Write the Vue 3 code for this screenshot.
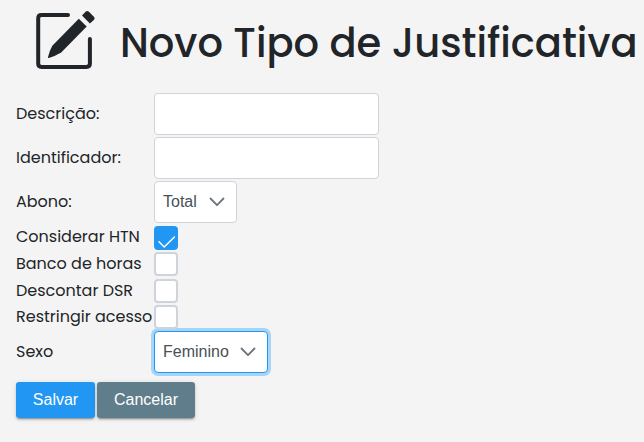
<template>
  <div class="page">
    <header class="page-header">
      <svg class="header-icon" viewBox="0 0 60 60" aria-hidden="true">
        <path class="icon-box" d="M33 4H6.6Q3.2 4 3.2 7.4V52.6Q3.2 56 6.6 56H51.4Q54.9 56 54.9 52.6V28" />
        <path class="icon-pen" d="M43.8 7.8 51.7 15.6 26.2 41.6Q20 45.4 13.9 46.9Q12.8 47.1 13 46Q14.4 40 17.3 34.8Z" />
        <path class="icon-pen" d="M47 4.4 50.8 0.6Q52.3 -0.6 53.7 0.6L59.1 6Q60.2 7.4 59.1 8.7L54.9 12.6Z" />
      </svg>
      <h1>Novo Tipo de Justificativa</h1>
    </header>

    <form @submit.prevent>
      <div class="row">
        <label for="descricao">Descrição:</label>
        <input id="descricao" v-model="form.descricao" type="text" class="input" />
      </div>
      <div class="row">
        <label for="identificador">Identificador:</label>
        <input id="identificador" v-model="form.identificador" type="text" class="input" />
      </div>
      <div class="row">
        <label for="abono">Abono:</label>
        <button id="abono" type="button" class="dropdown">
          <span>{{ form.abono }}</span>
          <svg viewBox="0 0 16 16" aria-hidden="true"><path d="M1.5 4.5 8 11.2 14.5 4.5" /></svg>
        </button>
      </div>

      <div class="checks">
        <div v-for="opcao in opcoes" :key="opcao.id" class="row check-row">
          <label :for="opcao.id">{{ opcao.label }}</label>
          <span class="checkbox" :class="{ checked: opcao.ativo }">
            <input :id="opcao.id" v-model="opcao.ativo" type="checkbox" />
            <svg v-if="opcao.ativo" viewBox="0 0 24 24" aria-hidden="true"><path d="M5 15.8 10.2 21 20.4 11" /></svg>
          </span>
        </div>
      </div>

      <div class="row">
        <label for="sexo">Sexo</label>
        <button id="sexo" type="button" class="dropdown dropdown-sexo focused">
          <span>{{ form.sexo }}</span>
          <svg viewBox="0 0 16 16" aria-hidden="true"><path d="M1.5 4.5 8 11.2 14.5 4.5" /></svg>
        </button>
      </div>

      <div class="actions">
        <button type="submit" class="btn btn-salvar">Salvar</button>
        <button type="button" class="btn btn-cancelar">Cancelar</button>
      </div>
    </form>
  </div>
</template>

<script setup>
import { reactive } from 'vue'

const form = reactive({
  descricao: '',
  identificador: '',
  abono: 'Total',
  sexo: 'Feminino',
})

const opcoes = reactive([
  { id: 'considerar', label: 'Considerar HTN', ativo: true },
  { id: 'banco', label: 'Banco de horas', ativo: false },
  { id: 'descontar', label: 'Descontar DSR', ativo: false },
  { id: 'restringir', label: 'Restringir acesso', ativo: false },
])
</script>

<style>
body {
  background: #f4f4f4;
}
</style>

<style scoped>
.page {
  box-sizing: border-box;
  height: 442px;
  padding-left: 16px;
  overflow: hidden;
  background: #f4f4f4;
  color: #212529;
  font-family: Poppins, Inter, sans-serif;
}

.page-header {
  display: flex;
  align-items: flex-start;
  height: 93px;
}

.header-icon {
  flex: none;
  width: 60px;
  height: 60px;
  margin: 11px 0 0 19px;
  overflow: visible;
}

.icon-box {
  fill: none;
  stroke: #212529;
  stroke-width: 4;
  stroke-linecap: round;
}

.icon-pen {
  fill: #212529;
}

h1 {
  margin: 19px 0 0 25px;
  font-size: 40px;
  font-weight: 500;
  line-height: 48px;
  white-space: nowrap;
}

.row {
  display: flex;
  align-items: center;
  height: 42px;
  margin-bottom: 2px;
}

.checks {
  box-sizing: border-box;
  height: 106px;
  padding-top: 0.5px;
}

.check-row {
  align-items: flex-start;
  height: 26.65px;
  margin-bottom: 0;
}

label {
  flex: none;
  width: 138px;
  font-size: 16px;
  line-height: 24px;
  white-space: nowrap;
}

.check-row label {
  margin-top: -0.15px;
}

.input {
  box-sizing: border-box;
  width: 225px;
  height: 42px;
  padding: 8px;
  border: 1px solid #ced4da;
  border-radius: 4px;
  outline: 0;
  background: #fff;
}

.dropdown {
  display: flex;
  align-items: center;
  justify-content: space-between;
  box-sizing: border-box;
  width: 83px;
  height: 42px;
  padding: 0 11px 0 8px;
  border: 1px solid #ced4da;
  border-radius: 4px;
  background: #fff;
  color: #495057;
  font: 16px 'Liberation Sans', Arial, sans-serif;
}

.dropdown svg {
  width: 16px;
  height: 16px;
  fill: none;
  stroke: #6c757d;
  stroke-width: 1.8;
  stroke-linecap: round;
  stroke-linejoin: round;
}

.dropdown-sexo {
  width: 114px;
}

.focused {
  border-color: #2196f3;
  box-shadow: 0 0 0 3px #a6d5fa;
}

.checkbox {
  position: relative;
  box-sizing: border-box;
  width: 24px;
  height: 24px;
  border: 2px solid #ced4da;
  border-radius: 4px;
  background: #fff;
}

.checkbox input {
  position: absolute;
  inset: 0;
  margin: 0;
  opacity: 0;
}

.checkbox svg {
  display: block;
  width: 24px;
  height: 24px;
  margin: -2px;
  fill: none;
  stroke: #fff;
  stroke-width: 1.5;
  stroke-linecap: round;
}

.checked {
  border-color: #2196f3;
  background: #2196f3;
}

.actions {
  display: flex;
  gap: 2px;
  padding-top: 7px;
}

.btn {
  height: 36px;
  padding: 0;
  border: 0;
  border-radius: 3px;
  color: #fff;
  font: 16px 'Liberation Sans', Arial, sans-serif;
  box-shadow: 0 3px 1px -2px rgba(0, 0, 0, 0.2), 0 2px 2px rgba(0, 0, 0, 0.14), 0 1px 5px rgba(0, 0, 0, 0.12);
}

.btn-salvar {
  width: 79px;
  background: #2196f3;
}

.btn-cancelar {
  width: 98px;
  background: #607d8b;
}
</style>
